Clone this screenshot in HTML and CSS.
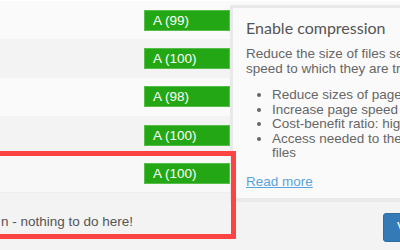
FILE: index.html
```html
<!DOCTYPE html>
<html lang="en">
<head>
    <meta charset="UTF-8">
    <meta name="viewport" content="width=device-width, initial-scale=1.0">
    <title>Speed audit</title>
    <link rel="stylesheet" href="styles.css">
</head>
<body>
    <div class="page">
        <!-- Audit results -->
        <div class="results">
            <div class="row"><span class="grade">A (99)</span></div>
            <div class="row"><span class="grade">A (100)</span></div>
            <div class="row"><span class="grade">A (98)</span></div>
            <div class="row"><span class="grade">A (100)</span></div>
            <div class="row row-active"><span class="grade">A (100)</span></div>
            <div class="row row-note">
                <span class="note">n - nothing to do here!</span>
                <button class="btn">View</button>
            </div>
        </div>

        <!-- Highlight around the selected check -->
        <div class="highlight"></div>

        <!-- Popover for the selected check -->
        <div class="popover">
            <h2>Enable compression</h2>
            <p>Reduce the size of files sent from your server to increase the<br>speed to which they are transferred to the browser.</p>
            <ul>
                <li>Reduce sizes of pages by up to 80%</li>
                <li>Increase page speed</li>
                <li>Cost-benefit ratio: high</li>
                <li>Access needed to the server configuration<br>files</li>
            </ul>
            <a href="#" class="more">Read more</a>
        </div>
    </div>
</body>
</html>
```

FILE: styles.css
```css
/* Page frame */
body {
    margin: 0;
    font-family: "Liberation Sans", Arial, sans-serif;
    background: #fff;
}

.page {
    position: relative;
    width: 400px;
    height: 250px;
    overflow: hidden;
}

/* Results table */
.results {
    padding-top: 1px;
}

.row {
    display: flex;
    align-items: center;
    justify-content: flex-end;
    height: 38.4px;
    padding-right: 170px;
    background: #fafafa;
}

.row:nth-child(even) {
    background: #f3f3f3;
}

.row-active {
    background: #f8f8f8;
    border-bottom: 1px solid #eeeeee;
    box-sizing: border-box;
}

.grade {
    box-sizing: border-box;
    width: 86px;
    height: 21px;
    padding-left: 8px;
    line-height: 19px;
    font-size: 13.5px;
    color: #fff;
    background: #23a714;
    border: 1px solid #56bd48;
}

/* Last row with the message */
.row-note {
    align-items: flex-start;
    justify-content: space-between;
    height: 57px;
    padding: 19px 0 0 1px;
    background: #fff;
}

.note {
    margin-top: 2px;
    font-size: 13.5px;
    line-height: 16px;
    color: #555;
}

.btn {
    width: 67px;
    height: 29px;
    margin: 1px -50px 0 0;
    padding: 0 0 0 13px;
    text-align: left;
    font-family: "Liberation Sans", Arial, sans-serif;
    font-size: 14px;
    color: #fff;
    background: #337ab7;
    border: 1px solid #2e6da4;
    border-radius: 3px;
}

/* Red frame around the selected row */
.highlight {
    position: absolute;
    left: -10px;
    top: 151px;
    width: 246px;
    height: 88px;
    box-sizing: border-box;
    border: 5px solid #fe4343;
    z-index: 2;
}

/* Popover */
.popover {
    position: absolute;
    left: 230px;
    top: 5px;
    width: 480px;
    height: 197px;
    box-sizing: border-box;
    padding: 10px 13px 0;
    background: #fafafa;
    border: 3px solid #e9e9e9;
    border-bottom-width: 4px;
    color: #666;
    z-index: 1;
}

.popover h2 {
    margin: 0;
    font-family: Lato, "Open Sans", sans-serif;
    font-size: 16px;
    font-weight: normal;
    line-height: 20px;
    color: #555;
}

.popover p {
    margin: 8px 0 0;
    font-size: 13.5px;
    line-height: 15px;
}

.popover ul {
    margin: 12px 0 0;
    padding-left: 26px;
    font-size: 13.5px;
    line-height: 14.6px;
}

.more {
    display: inline-block;
    margin-top: 13px;
    font-size: 13.5px;
    line-height: 15px;
    color: #59a3dd;
}
```
